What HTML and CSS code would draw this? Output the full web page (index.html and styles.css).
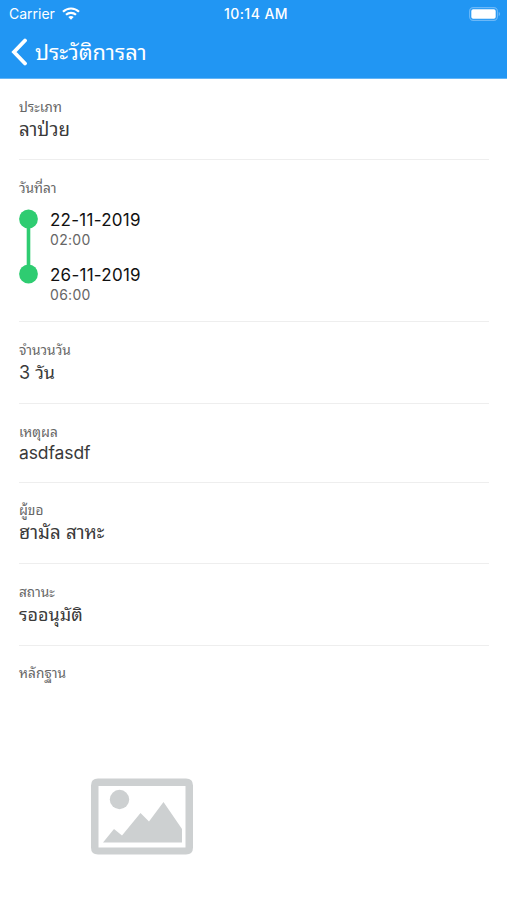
FILE: index.html
```html
<!DOCTYPE html>
<html lang="th">
<head>
<meta charset="utf-8">
<title>ประวัติการลา</title>
<link rel="stylesheet" href="styles.css">
</head>
<body>
<header class="header">
  <div class="status">
    <div class="carrier"><span>Carrier</span>
      <svg class="wifi" width="18" height="13" viewBox="0 0 18 13" fill="none" stroke="#fff" stroke-width="2.2"><path d="M1 4.7C5.5.4 12.5.4 17 4.7M4 7.8c2.8-2.6 7.2-2.6 10 0"/><path d="M9 12.7 6.3 10c1.500-1.400 3.900-1.400 5.400 0z" fill="#fff" stroke="none"/></svg>
    </div>
    <time class="clock">10:14 AM</time>
    <svg class="battery" width="32" height="14" viewBox="0 0 32 14"><rect x=".6" y=".6" width="27.8" height="12.8" rx="3.6" fill="none" stroke="#6bb8f8" stroke-width="1.100"/><rect x="2.300" y="2.300" width="24.400" height="9.400" rx="1.800" fill="#fff"/><path d="M29.700 5v4c1.800-.5 1.800-3.500 0-4z" fill="#6bb8f8"/></svg>
  </div>
  <div class="nav">
    <svg class="back" width="17" height="28" viewBox="0 0 17 28" fill="none" stroke="#fff" stroke-width="3.800"><path d="M15 2.500 4 14 15 25.500" stroke-linecap="round"/></svg>
    <h1 class="title">ประวัติการลา</h1>
  </div>
</header>
<main class="details">
  <section class="row row-type"><div class="label">ประเภท</div><div class="value">ลาป่วย</div></section>
  <section class="row row-dates"><div class="label">วันที่ลา</div>
    <div class="timeline">
      <svg width="19" height="75" viewBox="0 0 19 75" fill="#2ecc71"><path d="M7.700 9h3.600v56H7.700z"/><circle cx="9.500" cy="10" r="9.400"/><circle cx="9.500" cy="65" r="9.400"/></svg>
      <div class="stops">
        <div class="stop"><div class="date">22-11-2019</div><div class="hour">02:00</div></div>
        <div class="stop"><div class="date">26-11-2019</div><div class="hour">06:00</div></div>
      </div>
    </div>
  </section>
  <section class="row row-days"><div class="label">จำนวนวัน</div><div class="value">3 วัน</div></section>
  <section class="row row-reason"><div class="label">เหตุผล</div><div class="value latin">asdfasdf</div></section>
  <section class="row row-person"><div class="label">ผู้ขอ</div><div class="value">ฮามัล สาหะ</div></section>
  <section class="row row-state"><div class="label">สถานะ</div><div class="value">รออนุมัติ</div></section>
  <section class="row row-proof"><div class="label">หลักฐาน</div>
    <svg class="picture" width="104" height="78" viewBox="0 0 104 78" fill="#cdd0d1"><path fill-rule="evenodd" d="M7 .5h88q7 0 7 7v62q0 7-7 7H7q-7 0-7-7v-62Q0 .5 7 .5zM7.500 8v61.500h87V8z"/><circle cx="28.500" cy="21.500" r="9.700"/><path d="M12 64.500 23 51l8 6.500L49.500 35l8.500 8.500L72.500 24 91 51v13.500z"/></svg>
  </section>
</main>
</body>
</html>
```
FILE: styles.css
```css
* { box-sizing: border-box; }
body { margin: 0; background: #fff; color: #3a3a3a; font-family: Inter, "Noto Sans Thai Looped", Loma, sans-serif; }
.header { height: 79px; background: #2196f3; color: #fff; border-bottom: 1px solid #64b5f6; }
.status { display: grid; grid-template-columns: 1fr auto 1fr; align-items: center; height: 28px; padding: 0 6px 0 9px; font-size: 14px; line-height: 28px; }
.carrier { display: flex; align-items: center; gap: 7px; }
.carrier .wifi { margin-top: -2px; }
.clock { position: relative; left: 1px; font-size: 14px; font-weight: 500; letter-spacing: .45px; }
.battery { justify-self: end; margin-top: -1px; }
.nav { display: flex; align-items: center; height: 49px; padding: 0 0 0 10px; gap: 8px; }
.back { margin-top: -2px; }
.title { margin: -2px 0 0; font-size: 21.800px; line-height: 30px; font-weight: 400; }
.details { padding: 0 18px 0 19px; }
.row { height: 81px; padding-top: 18px; border-bottom: 1px solid #eee; }
.label { height: 20px; line-height: 20px; font-size: 13.700px; color: #666; white-space: nowrap; }
.value { height: 24px; line-height: 25px; font-size: 18.700px; white-space: nowrap; }
.value.latin { font-size: 17.500px; line-height: 22px; letter-spacing: -.1px; }
.row-dates { height: 162px; }
.row-days .value { font-size: 18px; }
.row-days { height: 82px; }
.row-reason { height: 79px; }
.row-person { padding-top: 17px; }
.row-state { height: 82px; padding-top: 18px; }
.row-state .value { font-size: 18px; }
.row-proof { height: 255px; padding-top: 17px; border: 0; }
.timeline { display: flex; gap: 12px; margin-top: 11px; }
.stop { height: 55px; }
.date { color: #111; font-size: 17px; line-height: 22px; letter-spacing: .25px; }
.hour { color: #666; font-size: 14px; line-height: 17px; letter-spacing: .3px; }
.picture { display: block; margin: 95px 0 0 72px; }
```
